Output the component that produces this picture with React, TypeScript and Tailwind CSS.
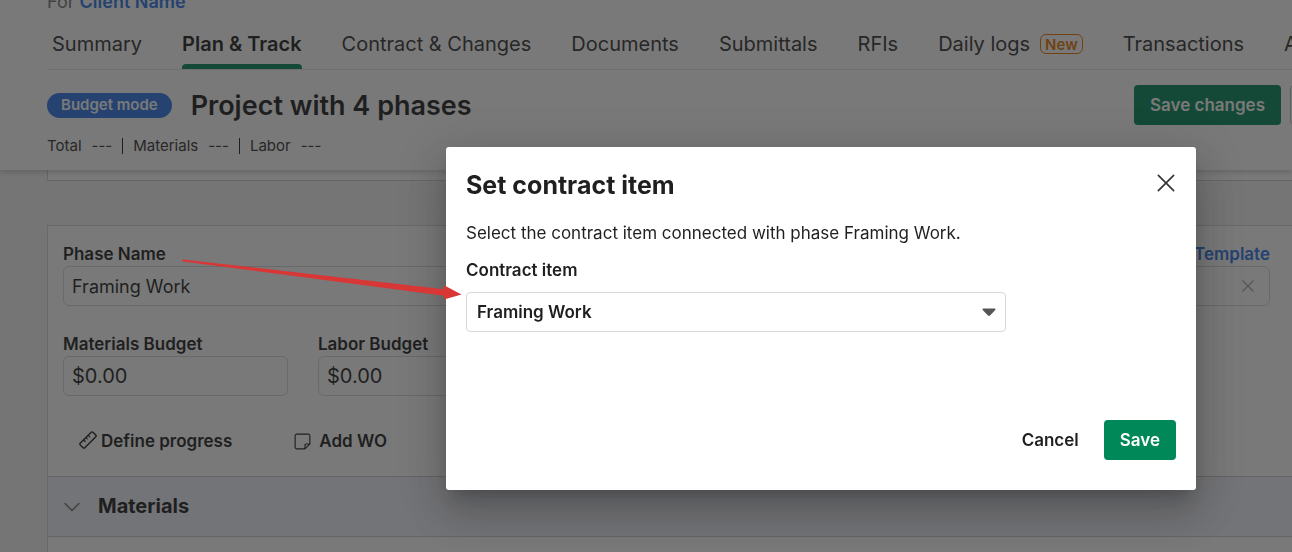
import { useState } from "react";

const tabs = [
  { label: "Summary" },
  { label: "Plan & Track", active: true },
  { label: "Contract & Changes" },
  { label: "Documents" },
  { label: "Submittals" },
  { label: "RFIs" },
  { label: "Daily logs", badge: "New" },
  { label: "Transactions" },
  { label: "A" },
];

const totals = ["Total", "Materials", "Labor"];

function RulerIcon() {
  return (
    <svg className="mb-1" width="18" height="18" viewBox="0 0 18 18" fill="none" stroke="currentColor" strokeLinecap="round" strokeLinejoin="round" aria-hidden="true">
      <path strokeWidth="1.4" d="M1.200 12.200 12.200 1.200a1.200 1.200 0 0 1 1.700 0l2.900 2.900a1.200 1.200 0 0 1 0 1.700L5.800 16.800a1.200 1.200 0 0 1-1.700 0l-2.900-2.900a1.200 1.200 0 0 1 0-1.700Z" />
      <path strokeWidth="1.200" d="m4.700 9 1.500 1.500M7 6.700l1.200 1.200M9.300 4.400l1.500 1.500" />
    </svg>
  );
}

function NoteIcon() {
  return (
    <svg className="mb-0.5" width="17" height="17" viewBox="0 0 18 18" fill="none" stroke="currentColor" strokeWidth="1.200" strokeLinejoin="round" aria-hidden="true">
      <path d="M3 1.200h12A1.800 1.800 0 0 1 16.800 3v8.600l-5.200 5.200H3A1.800 1.800 0 0 1 1.200 15V3A1.800 1.800 0 0 1 3 1.200Z" />
      <path d="M11.600 16.600v-3.800a1.200 1.200 0 0 1 1.200-1.200h3.800" />
    </svg>
  );
}

function Cross({ size, width }: { size: number; width: number }) {
  return (
    <svg width={size} height={size} viewBox="0 0 20 20" fill="none" stroke="currentColor" strokeWidth={width} strokeLinecap="round" aria-hidden="true">
      <path d="m1.500 1.500 17 17m0-17-17 17" />
    </svg>
  );
}

function Header() {
  return (
    <header className="relative z-10 bg-white pb-3 pl-[47px] shadow-[0_2px_6px_rgba(0,0,0,0.2)]">
      <p className="-mt-2.5 text-lg leading-6 text-[#777]">
        For <a href="#client" className="font-semibold text-[#2d76e8]">Client Name</a>
      </p>
      <nav className="mt-2 flex gap-10 border-b border-[#e4e4e4] pl-[5px] text-xl whitespace-nowrap">
        {tabs.map((tab) => (
          <a
            key={tab.label}
            href="#tab"
            className={
              tab.active
                ? "relative flex h-[47px] items-center pb-[3px] font-semibold after:absolute after:inset-x-0 after:bottom-0 after:h-[5px] after:rounded-t after:bg-[#008858]"
                : "flex h-[47px] items-center pb-[3px] text-[#333]"
            }
          >
            {tab.label}
            {tab.badge && (
              <span className="ml-2.5 flex h-5 items-center rounded-md border border-[#e87500] px-1 text-[15px] font-semibold text-[#e87500]">
                {tab.badge}
              </span>
            )}
          </a>
        ))}
      </nav>
      <div className="mt-[15px] flex h-10 items-center whitespace-nowrap">
        <span className="flex h-[25px] items-center rounded-full bg-[#2d76e8] px-3.5 text-[15px] font-semibold text-white">Budget mode</span>
        <h1 className="ml-[19px] pt-0.5 text-[27px] leading-8 font-semibold">Project with 4 phases</h1>
        <button className="ml-auto h-10 shrink-0 rounded bg-[#008858] px-4 pt-0.5 text-[17px] font-semibold text-white">Save changes</button>
        <button aria-label="More options" className="-mr-[38px] ml-[9px] h-10 w-10 shrink-0 rounded border border-[#bbb]" />
      </div>
      <dl className="mt-[9px] flex h-6 items-center text-[15px] text-[#333]">
        {totals.map((name, i) => (
          <div key={name} className={i > 0 ? "ml-2.5 flex h-4 items-center gap-2.5 border-l border-[#1f1f1f] pl-2.5" : "flex items-center gap-2.5"}>
            <dt>{name}</dt>
            <dd>---</dd>
          </div>
        ))}
      </dl>
    </header>
  );
}

function MoneyField({ id, label }: { id: string; label: string }) {
  return (
    <div className="flex w-[225px] flex-col">
      <label htmlFor={id} className="h-6 text-[17px] leading-6 font-semibold">{label}</label>
      <input id={id} defaultValue="$0.00" className="h-10 w-full rounded-md border border-[#d8d8d8] px-2 text-xl" />
    </div>
  );
}

function PhaseCard() {
  return (
    <section className="mt-11 border-t border-l border-[#d8d8d8] bg-white">
      <div className="pt-4 pr-[22px] pl-[15px]">
        <div className="flex justify-between text-[17px] leading-6 font-semibold">
          <label htmlFor="phase">Phase Name</label>
          <a href="#template" className="text-[#2d76e8]">Template</a>
        </div>
        <div className="flex h-10 items-center rounded-md border border-[#d8d8d8] px-2">
          <input id="phase" defaultValue="Framing Work" className="min-w-0 grow pt-px text-lg" />
          <button aria-label="Clear phase name" className="mr-[7px] text-[#999]"><Cross size={12} width={2} /></button>
        </div>
        <div className="mt-[26px] flex gap-[30px]">
          <MoneyField id="materials-budget" label="Materials Budget" />
          <MoneyField id="labor-budget" label="Labor Budget" />
        </div>
        <div className="mt-[34px] flex h-6 items-center gap-[62px] pl-4 text-[17px] font-semibold">
          <button className="flex items-center gap-1"><RulerIcon />Define progress</button>
          <button className="flex items-center gap-2"><NoteIcon />Add WO</button>
        </div>
      </div>
      <div className="mt-[22px] flex h-[61px] items-center gap-[18px] border-y border-[#ccc] bg-[#f0f2fa] pl-4">
        <svg width="16" height="10" viewBox="0 0 16 10" fill="none" stroke="#777" strokeWidth="1.500" strokeLinecap="round" strokeLinejoin="round" aria-hidden="true">
          <path d="m1 1.500 7 7 7-7" />
        </svg>
        <h2 className="pb-0.5 text-xl font-bold">Materials</h2>
      </div>
      <div className="h-10" />
    </section>
  );
}

function ContractDialog() {
  const [item, setItem] = useState("Framing Work");
  return (
    <div className="fixed inset-0 z-20 flex items-start justify-end bg-[#1f1f1f]/60 pt-[147px] pr-24 pl-6">
      <div
        role="dialog"
        aria-modal="true"
        aria-labelledby="dialog-title"
        className="w-full max-w-[750px] rounded-[3px] bg-white px-5 pt-5 pb-[30px] shadow-[0_11px_15px_-7px_rgba(0,0,0,0.2),0_24px_38px_3px_rgba(0,0,0,0.14),0_9px_46px_8px_rgba(0,0,0,0.12)]"
      >
        <div className="flex items-start justify-between">
          <h2 id="dialog-title" className="text-[25px] leading-9 font-bold">Set contract item</h2>
          <button aria-label="Close" className="mt-1.5 p-px text-[#333]"><Cross size={18} width={1.8} /></button>
        </div>
        <p className="mt-[18px] text-[17px] leading-6">Select the contract item connected with phase Framing Work.</p>
        <label htmlFor="contract-item" className="mt-[13px] block text-[17px] leading-6 font-semibold">Contract item</label>
        <div className="relative mt-2.5 max-w-[540px]">
          <select
            id="contract-item"
            value={item}
            onChange={(e) => setItem(e.target.value)}
            className="block h-10 w-full appearance-none rounded border border-[#d8d8dc] bg-white px-2.5 pt-px text-[17px] font-semibold"
          >
            <option>Framing Work</option>
          </select>
          <svg className="pointer-events-none absolute top-4 right-2.5" width="14" height="9" viewBox="0 0 14 9" fill="#555" aria-hidden="true">
            <path d="M1.300.5h11.400c.8 0 1.100.9.600 1.500L8 7.500c-.6.600-1.400.600-2 0L.7 2C.2 1.400.5.5 1.300.5Z" />
          </svg>
        </div>
        <div className="mt-[88px] flex justify-end gap-[9px] text-[17px] font-semibold">
          <button className="h-10 px-4 pt-0.5">Cancel</button>
          <button className="h-10 rounded bg-[#008858] px-4 pt-0.5 text-white">Save</button>
        </div>
      </div>
      <svg className="pointer-events-none absolute top-[258px] left-[181px]" width="282" height="44" viewBox="0 0 282 44" fill="#d93636" aria-hidden="true">
        <path d="M2 1.500 263 31.200V27.200L280.500 36.500 263 41.500V37.800L2 3.500A1 1 0 0 1 2 1.500Z" />
      </svg>
    </div>
  );
}

export default function App() {
  return (
    <div className="h-screen overflow-hidden bg-[#f5f5f5] font-['Inter',sans-serif] text-[#1f1f1f]">
      <Header />
      <main className="pl-[47px]">
        <div className="h-[11px] border-b border-l border-[#d0d0d0] bg-white" />
        <PhaseCard />
      </main>
      <ContractDialog />
    </div>
  );
}
